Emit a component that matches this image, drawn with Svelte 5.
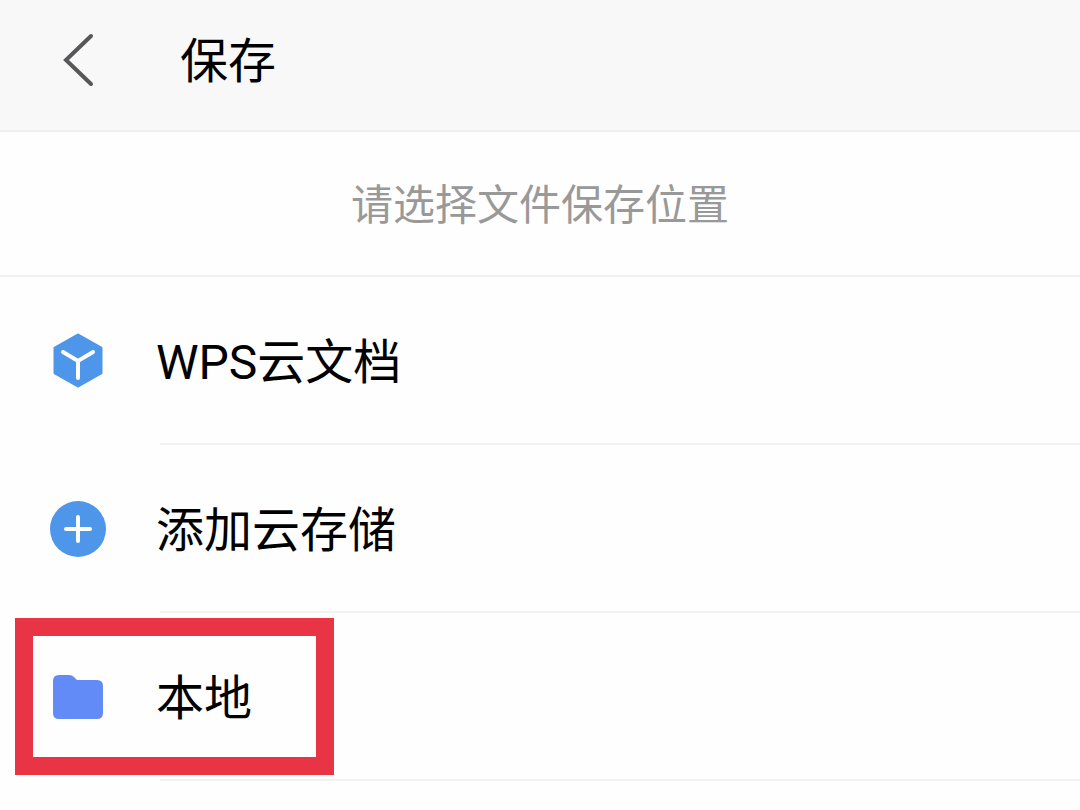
<script>
  const places = [
    { name: 'WPS云文档', icon: 'cube' },
    { name: '添加云存储', icon: 'add' },
    { name: '本地', icon: 'folder', marked: true }
  ];
</script>

<div class="page">
  <header>
    <button class="back" aria-label="返回">
      <svg width="32" height="56" viewBox="0 0 32 56"><path d="M29 4 4 28l25 24" fill="none" stroke="#58585a" stroke-width="4" stroke-linecap="round" /></svg>
    </button>
    <h1>保存</h1>
  </header>
  <p class="hint">请选择文件保存位置</p>
  <ul>
    {#each places as place}
      <li>
        <button class="row">
          <svg width="56" height="56" viewBox="0 0 56 56">
            {#if place.icon === 'cube'}
              <path d="M28 2 51 15v25L28 53 5 40V15Z" fill="#4e96ea" stroke="#4e96ea" stroke-width="3" stroke-linejoin="round" />
              <path d="M13 19l15 9 15-9M28 28v17" fill="none" stroke="#fff" stroke-width="4" stroke-linecap="round" />
            {:else if place.icon === 'add'}
              <circle cx="28" cy="28" r="28" fill="#4e96ea" />
              <path d="M16 28h24M28 16v24" stroke="#fff" stroke-width="4" stroke-linecap="round" />
            {:else}
              <path d="M3 12q0-6 6-6h10q3 0 5 2l3 3h20q6 0 6 6v27q0 6-6 6H9q-6 0-6-6Z" fill="#628bf8" />
            {/if}
          </svg>
          <span class="label">{place.name}</span>
        </button>
        {#if place.marked}<div class="mark"></div>{/if}
      </li>
    {/each}
  </ul>
</div>

<style>
  :global(body) { margin: 0; background: #fefefe; }
  .page { font-family: Roboto, "Noto Sans CJK SC", sans-serif; color: #000; }
  header { display: flex; align-items: center; height: 132px; padding: 0 62px 10px; gap: 86px; background: #f8f8f8; border-bottom: 2px solid #efefef; box-sizing: border-box; }
  button { border: 0; background: none; padding: 0; font: inherit; color: inherit; cursor: pointer; }
  .back { display: flex; }
  svg { display: block; flex: none; }
  h1 { margin: 0; padding-top: 4px; font-size: 48px; line-height: 60px; font-weight: 400; }
  .hint { margin: 0; height: 145px; padding-top: 2px; box-sizing: border-box; border-bottom: 2px solid #f1f1f1; text-align: center; font-size: 42px; line-height: 144px; color: #999; }
  ul { margin: 0; padding: 0; list-style: none; }
  li { position: relative; }
  li::after { content: ""; display: block; height: 2px; margin-left: 160px; background: #f2f2f2; }
  .row { display: flex; align-items: center; width: 100%; height: 166px; padding: 2px 0 0 50px; box-sizing: border-box; gap: 50px; text-align: left; }
  .label { flex: 1; padding-top: 4px; font-size: 48px; line-height: 60px; }
  .mark { position: absolute; left: 15px; top: 5px; width: 319px; height: 157px; box-sizing: border-box; border: 18px solid #e93445; pointer-events: none; }
</style>
